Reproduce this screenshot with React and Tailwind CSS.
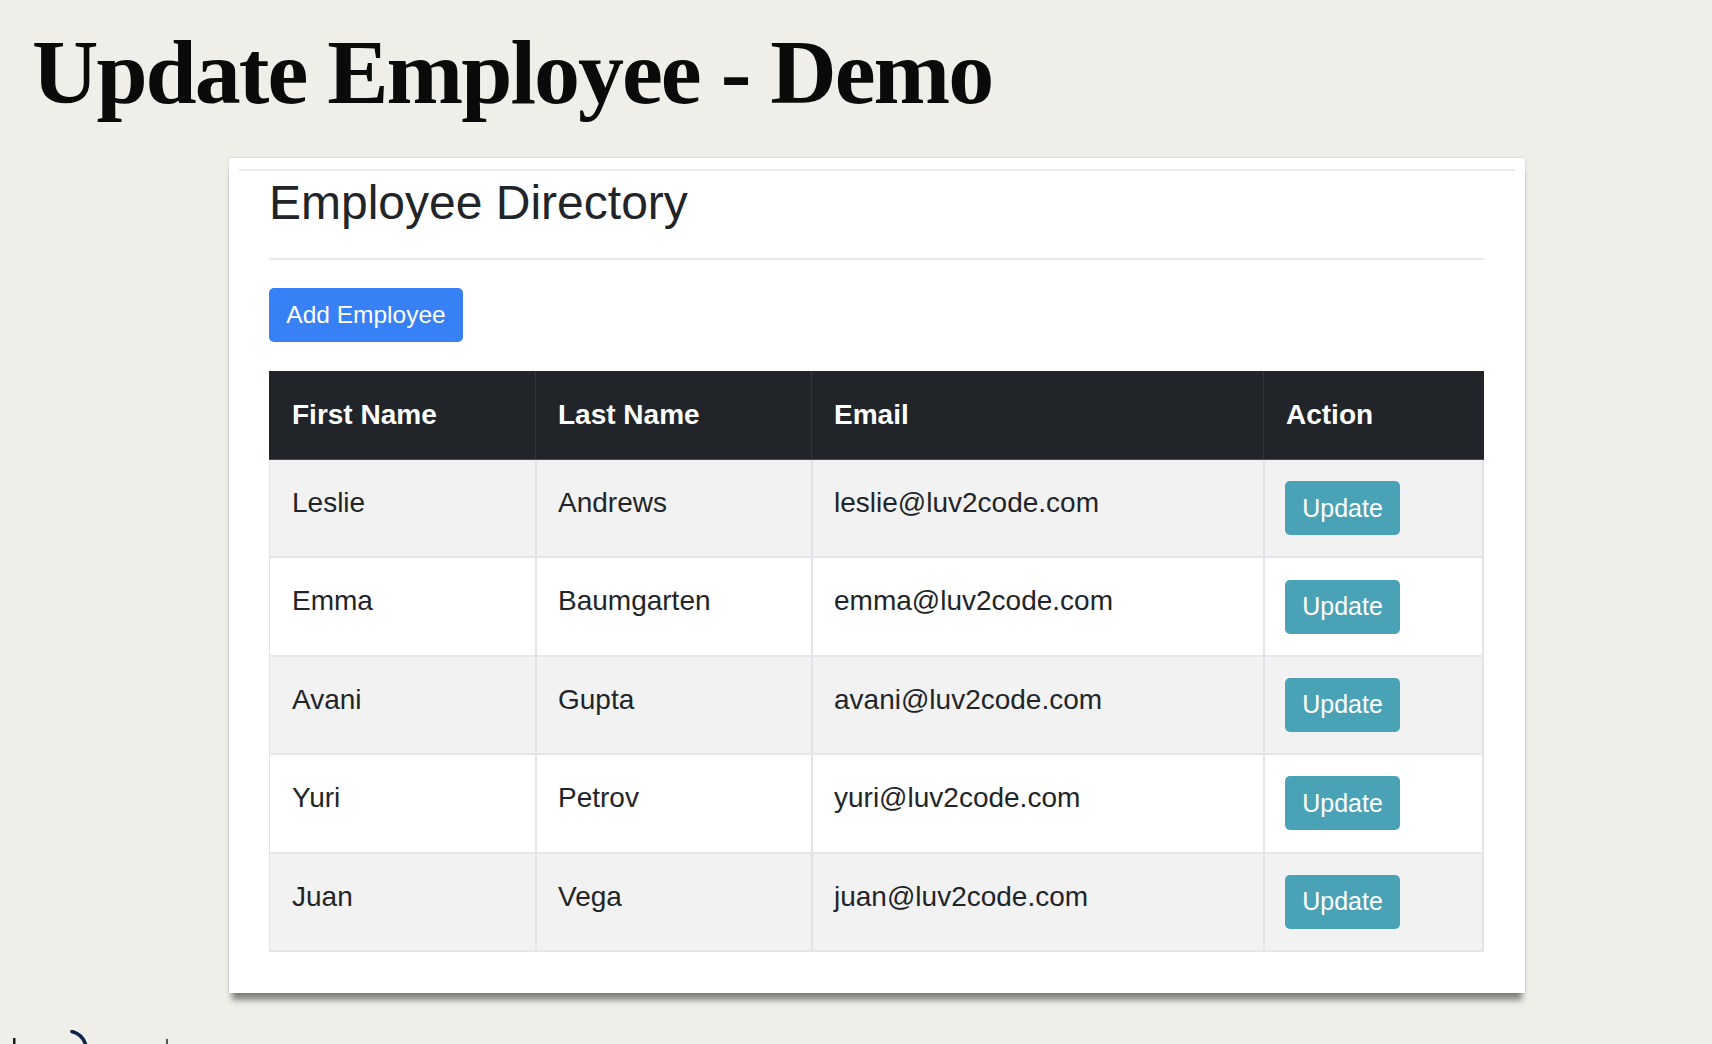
import React from "react";

const rows = [
  ["Leslie", "Andrews", "leslie@luv2code.com"],
  ["Emma", "Baumgarten", "emma@luv2code.com"],
  ["Avani", "Gupta", "avani@luv2code.com"],
  ["Yuri", "Petrov", "yuri@luv2code.com"],
  ["Juan", "Vega", "juan@luv2code.com"],
];

export default function App() {
  return (
    <div className="relative w-[1712px] h-[1044px] overflow-hidden bg-[#efeee9] font-['Liberation_Sans',Arial,sans-serif]">
      <h1 className="pl-[32px] pt-[26px] font-['Liberation_Serif','Times_New_Roman',serif] font-bold text-[92px] leading-none tracking-[-2px] text-[#0a0a0a] whitespace-nowrap">
        Update Employee - Demo
      </h1>

      <div className="ml-[229px] mt-[40px] w-[1296px] h-[835px] bg-white shadow-[0_10px_6px_-3px_rgba(0,0,0,0.45),0_0_2px_rgba(0,0,0,0.18)]">
        <div className="pt-[11px] pl-[10px] pr-[10px]">
          <div className="h-[2px] bg-[#ececec]" />
        </div>
        <div className="ml-[40px] w-[1215px]">
          <h2 className="mt-[8px] text-[48px] leading-none font-normal text-[#212529] whitespace-nowrap">
            Employee Directory
          </h2>
          <div className="mt-[31px] h-[2px] bg-[#e9e9e9]" />
          <button className="mt-[28px] w-[194px] h-[54px] rounded-[5px] bg-[#3880f6] text-white text-[24.5px] leading-none flex items-center justify-center">
            Add Employee
          </button>

          <div className="mt-[29px]">
            <div className="grid grid-cols-[266px_276px_452px_221px] h-[89px] bg-[#212529] border-b border-[#454b52] text-white font-bold text-[28px]">
              <div className="flex items-center pl-[23px]">First Name</div>
              <div className="flex items-center pl-[22px] border-l border-[#32383e]">Last Name</div>
              <div className="flex items-center pl-[22px] border-l border-[#32383e]">Email</div>
              <div className="flex items-center pl-[22px] border-l border-[#32383e]">Action</div>
            </div>
            {rows.map((r, i) => (
              <div
                key={r[2]}
                className={
                  "grid grid-cols-[266px_276px_452px_221px] h-[98.4px] border-b-2 border-[#e4e6e9] text-[28px] text-[#212529] " +
                  (i % 2 === 0 ? "bg-[#f2f2f2]" : "bg-white")
                }
              >
                <div className="pl-[22px] pt-[22px] leading-[42px] border-l border-[#e1e3e6]">{r[0]}</div>
                <div className="pl-[21px] pt-[22px] leading-[42px] border-l-2 border-[#e1e3e6]">{r[1]}</div>
                <div className="pl-[21px] pt-[22px] leading-[42px] border-l-2 border-[#e1e3e6]">{r[2]}</div>
                <div className="pl-[20px] flex items-center border-l-2 border-r-2 border-[#e1e3e6]">
                  <button className="w-[115px] h-[54px] rounded-[5px] bg-[#4aa2b7] text-white text-[25px] leading-none flex items-center justify-center">
                    Update
                  </button>
                </div>
              </div>
            ))}
          </div>
        </div>
      </div>

      <svg className="absolute left-0 bottom-0" width="200" height="14" viewBox="0 0 200 14">
        <rect x="13" y="8" width="2.5" height="6" fill="#1a1a1a" />
        <path d="M72 1.5 C78 3 83 7 85.5 14" stroke="#0f2448" strokeWidth="3.5" fill="none" strokeLinecap="round" />
        <rect x="166" y="9" width="2" height="5" fill="#555" />
      </svg>
    </div>
  );
}
